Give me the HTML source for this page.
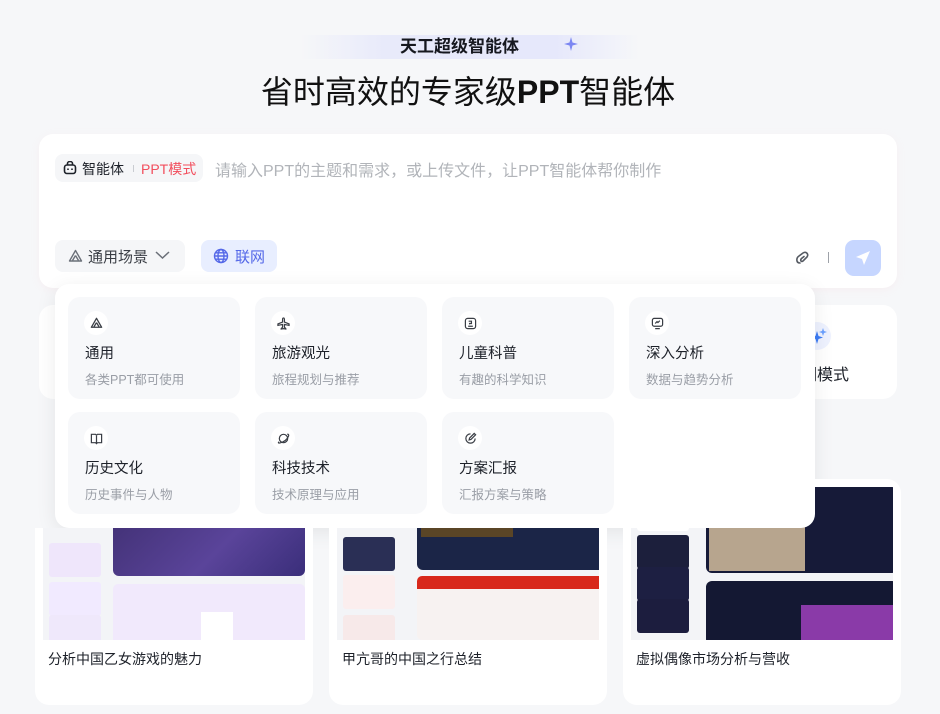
<!DOCTYPE html>
<html><head><meta charset="utf-8"><style>
*{margin:0;padding:0;box-sizing:border-box}
body{width:940px;height:714px;overflow:hidden;background:#f6f7f9;font-family:"Liberation Sans","Noto Sans CJK SC",sans-serif;position:relative;color:#1d2129}
.abs{position:absolute}
.badge{left:300px;top:35px;width:340px;height:24px;background:linear-gradient(90deg,rgba(232,234,250,0),#e8eafa 25%,#e6e8fb 75%,rgba(232,234,250,0));}
.badge span{position:absolute;left:100px;top:0;font-size:17px;font-weight:bold;line-height:24px;color:#16181f}
.title{left:0;width:936px;top:70px;text-align:center;font-size:32px;line-height:44px;color:#111}
.card{background:#fff;border-radius:14px}
.chip{background:#f5f6f8;border-radius:8px}
.item{position:absolute;width:172px;height:102px;background:#f7f8fa;border-radius:12px}
.item .ic{position:absolute;left:16px;top:14px;width:24px;height:24px;border-radius:12px;background:#fff;display:flex;align-items:center;justify-content:center}
.item .t{position:absolute;left:17px;top:45px;font-size:14.5px;color:#1d2129}
.item .s{position:absolute;left:17px;top:72px;font-size:12.5px;color:#9a9ea6}
.pc{position:absolute;top:479px;width:278px;height:226px;background:#fff;border-radius:14px;overflow:hidden}
.pc .img{position:absolute;left:8px;top:8px;width:262px;height:153px;background:#f3f4f7;overflow:hidden}
.pc .cap{position:absolute;left:13px;top:170px;font-size:14px;color:#1d2129}
.th{position:absolute;left:6px;width:52px;height:34px;border-radius:3px}
</style></head><body>

<div class="abs badge"><span>天工超级智能体</span>
<svg class="abs" style="left:264px;top:2px" width="14" height="14" viewBox="0 0 14 14"><path d="M7 0 L8.5 5.5 L14 7 L8.5 8.5 L7 14 L5.5 8.5 L0 7 L5.5 5.5Z" fill="#7b86f2"/></svg></div>
<div class="abs title">省时高效的专家级<b style="font-weight:bold">PPT</b>智能体</div>

<div class="abs card" style="left:39px;top:305px;width:858px;height:94px"></div>
<div class="abs" style="left:803px;top:322px;width:28px;height:28px;border-radius:14px;background:#eef2ff"></div>
<svg class="abs" style="left:810px;top:327px" width="18" height="18" viewBox="0 0 18 18"><path d="M7 4 L8.5 9 L13 10.5 L8.5 12 L7 17 L5.5 12 L1 10.5 L5.5 9Z" fill="#3d7cf5"/><path d="M13 1 L14 4 L17 5 L14 6 L13 9 L12 6 L9 5 L12 4Z" fill="#6aa0ff"/></svg>
<div class="abs" style="left:801px;top:361px;font-size:16px;color:#1d2129">调模式</div>

<div class="abs card" style="left:39px;top:134px;width:858px;height:154px;box-shadow:0 2px 8px rgba(255,200,210,.15)"></div>
<div class="abs chip" style="left:55px;top:154px;width:148px;height:28px"></div>
<svg class="abs" style="left:63px;top:161px" width="14" height="14" viewBox="0 0 14 14" fill="none" stroke="#1d2129" stroke-width="1.6"><rect x="1.5" y="4" width="11" height="8.5" rx="2.5"/><path d="M4.5 4 V2.5 a2.5 2 0 0 1 5 0 V4"/><path d="M5 7.5v1.5M9 7.5v1.5"/></svg>
<div class="abs" style="left:82px;top:159px;font-size:14px;color:#1d2129">智能体</div>
<div class="abs" style="left:133px;top:165px;width:1px;height:7px;background:#c9ccd1"></div>
<div class="abs" style="left:141px;top:159px;font-size:14px;color:#f24e5d">PPT模式</div>
<div class="abs" style="left:215px;top:157px;font-size:16px;color:#b1b4b9">请输入PPT的主题和需求，或上传文件，让PPT智能体帮你制作</div>

<div class="abs chip" style="left:55px;top:240px;width:130px;height:32px"></div>
<svg class="abs" style="left:68px;top:249px" width="15" height="14" viewBox="0 0 15 14" fill="none" stroke="#6b7079" stroke-width="1.4"><path d="M7.5 1.5 L13.5 12 H1.5Z" stroke-linejoin="round"/><path d="M7.5 6.5 L4.5 11.5 M7.5 6.5 L10.5 11.5"/></svg>
<div class="abs" style="left:88px;top:246px;font-size:15px;color:#3a3e45">通用场景</div>
<svg class="abs" style="left:155px;top:250px" width="15" height="10" viewBox="0 0 15 10" fill="none" stroke="#6b7079" stroke-width="1.5"><path d="M1 2 L7.5 8 L14 2"/></svg>
<div class="abs" style="left:201px;top:240px;width:76px;height:32px;border-radius:8px;background:#e8eeff"></div>
<svg class="abs" style="left:213px;top:248px" width="16" height="16" viewBox="0 0 16 16" fill="none" stroke="#5468e8" stroke-width="1.4"><circle cx="8" cy="8" r="6.5"/><ellipse cx="8" cy="8" rx="3" ry="6.5"/><path d="M1.5 8h13M2.5 4.8h11M2.5 11.2h11"/></svg>
<div class="abs" style="left:235px;top:246px;font-size:15px;color:#5468e8">联网</div>

<svg class="abs" style="left:794px;top:249px" width="18" height="18" viewBox="0 0 18 18" fill="none" stroke="#555a62" stroke-width="1.6" stroke-linecap="round"><path d="M6 14 C2 14 2 9 5 7 L9 4 C12 2 15 5 13 8 L9 12 C7 13.5 6 11 7.5 9.5 L10 7.5"/></svg>
<div class="abs" style="left:828px;top:252px;width:1px;height:11px;background:#9ea2a9"></div>
<div class="abs" style="left:845px;top:240px;width:36px;height:36px;border-radius:9px;background:#c6d6ff"></div>
<svg class="abs" style="left:854px;top:249px" width="18" height="18" viewBox="0 0 18 18"><path d="M16 2 L2 8 L8 10 L10 16Z" fill="#fff"/></svg>

<div class="abs card" style="left:55px;top:284px;width:760px;height:244px;box-shadow:0 4px 20px rgba(0,0,0,.08)">
 <div class="item" style="left:13px;top:13px"><div class="ic"><svg width="13" height="12" viewBox="0 0 15 14" fill="none" stroke="#3a3e45" stroke-width="1.5"><path d="M7.5 1.5 L13.5 12 H1.5Z" stroke-linejoin="round"/><path d="M7.5 6.5 L4.5 11.5 M7.5 6.5 L10.5 11.5"/></svg></div><div class="t">通用</div><div class="s">各类PPT都可使用</div></div>
 <div class="item" style="left:200px;top:13px"><div class="ic"><svg width="13" height="13" viewBox="0 0 14 14" fill="none" stroke="#3a3e45" stroke-width="1.3"><path d="M7 1 C8 1 8 2 8 3 V5.5 L13 7.5 V9 L8 8 V11 L9.5 12.5 V13 L7 12.5 L4.5 13 V12.5 L6 11 V8 L1 9 V7.5 L6 5.5 V3 C6 2 6 1 7 1Z"/></svg></div><div class="t">旅游观光</div><div class="s">旅程规划与推荐</div></div>
 <div class="item" style="left:387px;top:13px"><div class="ic"><svg width="13" height="13" viewBox="0 0 14 14" fill="none" stroke="#3a3e45" stroke-width="1.3"><rect x="1.5" y="1.5" width="11" height="11" rx="2.5"/><path d="M5 4.5h3v2.5H6v1M4.5 10h5"/></svg></div><div class="t">儿童科普</div><div class="s">有趣的科学知识</div></div>
 <div class="item" style="left:574px;top:13px"><div class="ic"><svg width="13" height="13" viewBox="0 0 14 14" fill="none" stroke="#3a3e45" stroke-width="1.3"><rect x="1.5" y="1.5" width="11" height="8.5" rx="2"/><path d="M4.5 7 L6.5 5 L7.5 6 L9.5 4M4.5 12.5h5"/></svg></div><div class="t">深入分析</div><div class="s">数据与趋势分析</div></div>
 <div class="item" style="left:13px;top:128px"><div class="ic"><svg width="13" height="13" viewBox="0 0 14 14" fill="none" stroke="#3a3e45" stroke-width="1.3"><path d="M1.5 2.5 H6 L7 3.5 L8 2.5 H12.5 V11.5 H8 L7 12.5 L6 11.5 H1.5Z M7 3.5 V12.5"/></svg></div><div class="t">历史文化</div><div class="s">历史事件与人物</div></div>
 <div class="item" style="left:200px;top:128px"><div class="ic"><svg width="13" height="13" viewBox="0 0 14 14" fill="none" stroke="#3a3e45" stroke-width="1.3"><circle cx="7" cy="7" r="4.5"/><path d="M2 10.5 C0 13 5 12 9 9 C12.5 6 14 2 11 2.5"/></svg></div><div class="t">科技技术</div><div class="s">技术原理与应用</div></div>
 <div class="item" style="left:387px;top:128px"><div class="ic"><svg width="13" height="13" viewBox="0 0 14 14" fill="none" stroke="#3a3e45" stroke-width="1.3"><path d="M12 7 A5 5 0 1 1 7 2"/><path d="M11 1.5 L12.5 3 L7.5 8 L5.5 8.5 L6 6.5Z"/></svg></div><div class="t">方案汇报</div><div class="s">汇报方案与策略</div></div>
</div>

<div class="pc" style="left:35px;clip-path:inset(49px 0 0 0)">
 <div class="img">
  <div class="th" style="top:56px;background:#efe6fb"></div><div class="th" style="top:95px;background:#f1eaff"></div><div class="th" style="top:128px;background:#efe8fb"></div>
  <div class="abs" style="left:70px;top:0;width:192px;height:89px;background:linear-gradient(135deg,#3d2d6e,#5a449a 60%,#3a2e7a);border-radius:0 0 6px 6px"></div>
  <div class="abs" style="left:70px;top:97px;width:192px;height:60px;background:#f1e9fc;border-radius:5px"></div>
  <div class="abs" style="left:158px;top:125px;width:32px;height:28px;background:#fff"></div>
 </div>
 <div class="cap">分析中国乙女游戏的魅力</div>
</div>
<div class="pc" style="left:329px;clip-path:inset(49px 0 0 0)">
 <div class="img">
  <div class="th" style="top:50px;background:#2a2f55"></div><div class="th" style="top:88px;background:#fbeeee"></div><div class="th" style="top:128px;background:#f7e9e9"></div>
  <div class="abs" style="left:80px;top:0;width:192px;height:83px;background:#1b2547;border-radius:0 0 6px 6px"></div>
  <div class="abs" style="left:84px;top:0;width:92px;height:50px;background:#5a4526"></div>
  <div class="abs" style="left:80px;top:89px;width:192px;height:64px;background:#f7f2f1;border-radius:5px"></div>
  <div class="abs" style="left:80px;top:89px;width:192px;height:13px;background:#d8281b;border-radius:5px 5px 0 0"></div>
 </div>
 <div class="cap">甲亢哥的中国之行总结</div>
</div>
<div class="pc" style="left:623px">
 <div class="img">
  <div class="th" style="top:10px;background:#fff"></div><div class="th" style="top:48px;background:#1c1f3c"></div><div class="th" style="top:80px;background:#1d1f42"></div><div class="th" style="top:112px;background:#1c1d3e"></div>
  <div class="abs" style="left:75px;top:0;width:192px;height:86px;background:#161a38;border-radius:6px"></div>
  <div class="abs" style="left:78px;top:32px;width:96px;height:52px;background:#b7a58e"></div>
  <div class="abs" style="left:75px;top:94px;width:192px;height:64px;background:#141833;border-radius:6px"></div>
  <div class="abs" style="left:170px;top:118px;width:96px;height:40px;background:#8a3aa8"></div>
 </div>
 <div class="cap">虚拟偶像市场分析与营收</div>
</div>
<div class="abs" style="left:623px;top:479px;width:192px;height:49px;background:#fff;border-radius:0 0 14px 0"></div>
</body></html>
